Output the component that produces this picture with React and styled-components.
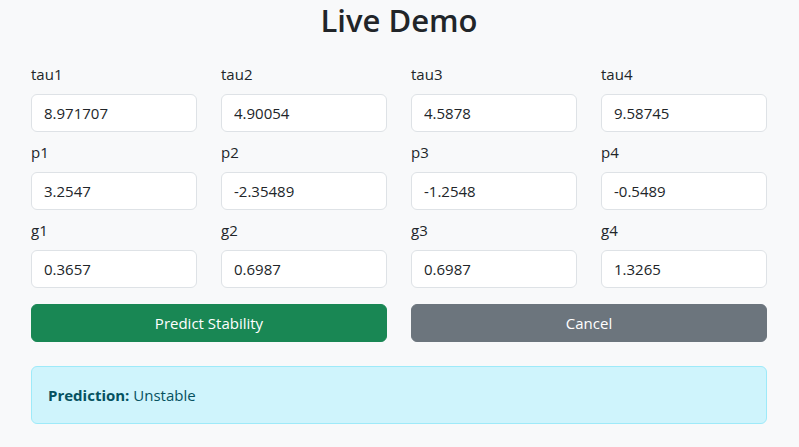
import React from "react";
import styled, { createGlobalStyle } from "styled-components";

const GlobalStyle = createGlobalStyle`
  * { box-sizing: border-box; }
  body {
    margin: 0;
    background: #f8f9fa;
    color: #212529;
    font-family: "Open Sans", "Noto Sans", sans-serif;
    font-size: 15px;
    line-height: 24px;
  }
`;

const Page = styled.div`
  padding: 2px 32px 0 31px;
`;

const Title = styled.h2`
  margin: 0 0 23px;
  text-align: center;
  font-size: 31px;
  font-weight: 600;
  line-height: 1.2;
`;

const Grid = styled.div`
  display: grid;
  grid-template-columns: repeat(4, 1fr);
  column-gap: 24px;
`;

const Field = styled.div`
  margin-bottom: 8px;
`;

const Label = styled.label`
  display: block;
  margin-bottom: 8px;
`;

const Input = styled.input`
  display: block;
  width: 100%;
  height: 38px;
  padding: 6px 12px;
  font: inherit;
  color: #212529;
  background: #fff;
  border: 1px solid #dee2e6;
  border-radius: 6px;
  outline: none;
`;

const Actions = styled.div`
  display: grid;
  grid-template-columns: 1fr 1fr;
  column-gap: 24px;
  margin-top: 8px;
`;

const Button = styled.button`
  height: 38px;
  font: inherit;
  color: #fff;
  background: ${(p) => (p.$variant === "secondary" ? "#6c757d" : "#198754")};
  border: 1px solid ${(p) => (p.$variant === "secondary" ? "#6c757d" : "#198754")};
  border-radius: 6px;
  cursor: pointer;
`;

const Alert = styled.div`
  margin-top: 24px;
  padding: 16px;
  color: #055160;
  background: #cff4fc;
  border: 1px solid #9eeaf9;
  border-radius: 6px;
`;

const fields = [
  ["tau1", "8.971707"],
  ["tau2", "4.90054"],
  ["tau3", "4.5878"],
  ["tau4", "9.58745"],
  ["p1", "3.2547"],
  ["p2", "-2.35489"],
  ["p3", "-1.2548"],
  ["p4", "-0.5489"],
  ["g1", "0.3657"],
  ["g2", "0.6987"],
  ["g3", "0.6987"],
  ["g4", "1.3265"],
];

const App = () => (
  <Page>
    <GlobalStyle />
    <Title>Live Demo</Title>
    <Grid>
      {fields.map(([name, value]) => (
        <Field key={name}>
          <Label htmlFor={name}>{name}</Label>
          <Input id={name} defaultValue={value} />
        </Field>
      ))}
    </Grid>
    <Actions>
      <Button>Predict Stability</Button>
      <Button $variant="secondary">Cancel</Button>
    </Actions>
    <Alert>
      <strong>Prediction:</strong> Unstable
    </Alert>
  </Page>
);

export default App;
